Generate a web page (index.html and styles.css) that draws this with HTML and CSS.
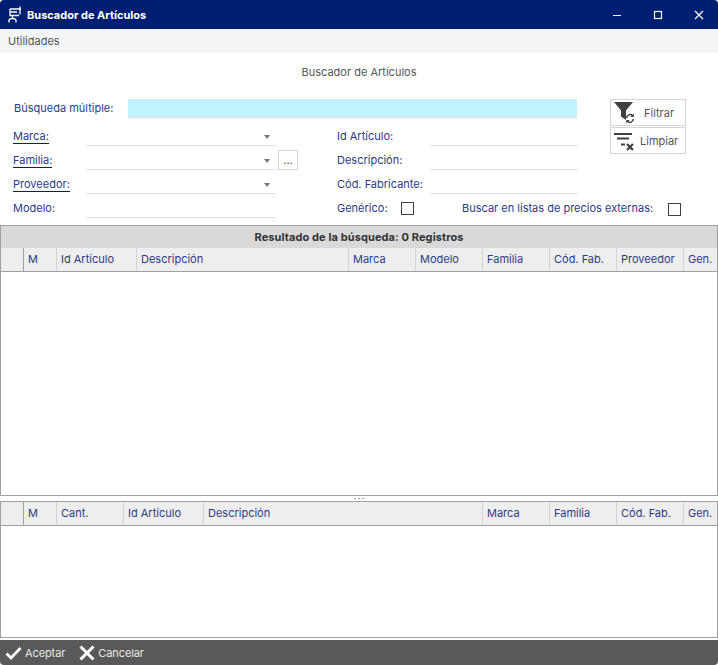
FILE: index.html
```html
<!DOCTYPE html>
<html lang="es">
<head>
<meta charset="UTF-8" />
<meta name="viewport" content="width=device-width, initial-scale=1" />
<title>Buscador de Artículos</title>
<link rel="stylesheet" href="styles.css">
</head>
<body>

<div class="window">
  <div class="titlebar">
    <svg class="app-icon" width="18" height="18" viewBox="0 0 18 18" fill="none" stroke="#fff" stroke-width="1.300">
      <path d="M4 3h11M14 0.500v8M4 3v6.500h9M4 6h7" />
      <path d="M6.500 9.500v3M3 16.500v-2q0-2 3.500-2t3.500 2v2" />
    </svg>
    <span class="title">Buscador de Artículos</span>
    <div class="win-controls">
      <svg width="10" height="10" viewBox="0 0 10 10"><path d="M1 5.500h8" stroke="#fff" stroke-width="1.200" /></svg>
      <svg width="10" height="10" viewBox="0 0 10 10" fill="none"><rect x="1.500" y="1.500" width="7" height="7" stroke="#fff" stroke-width="1.200" /></svg>
      <svg width="10" height="10" viewBox="0 0 10 10"><path d="M1 1l8 8M9 1l-8 8" stroke="#fff" stroke-width="1.200" /></svg>
    </div>
  </div>

  <div class="menubar">Utilidades</div>

  <div class="form-title">Buscador de Artículos</div>

  <div class="search-area">
    <div class="fields">
      <div class="multi-row">
        <label class="multi-label">Búsqueda múltiple:</label>
        <div class="multi-input"></div>
      </div>
      <div class="field-grid">
        <a class="lbl link">Marca:</a>
        <div class="ctl combo"><span class="arrow"></span></div>
        <span class="dots-cell"></span>
        <span class="lbl">Id Artículo:</span>
        <div class="ctl"></div>

        <a class="lbl link">Familia:</a>
        <div class="ctl combo"><span class="arrow"></span></div>
        <span class="dots-cell"><button class="dots">...</button></span>
        <span class="lbl">Descripción:</span>
        <div class="ctl"></div>

        <a class="lbl link">Proveedor:</a>
        <div class="ctl combo"><span class="arrow"></span></div>
        <span class="dots-cell"></span>
        <span class="lbl">Cód. Fabricante:</span>
        <div class="ctl"></div>

        <span class="lbl">Modelo:</span>
        <div class="ctl"></div>
        <span class="dots-cell"></span>
        <div class="check-row">
          <span class="lbl generic">Genérico:</span>
          <span class="check"></span>
          <span class="lbl external">Buscar en listas de precios externas:</span>
          <span class="check check-ext"></span>
        </div>
      </div>
    </div>

    <div class="tools">
      <button class="tool filter">
        <svg width="24" height="24" viewBox="0 0 24 24">
          <path d="M0 1h19l-7 8.500V19l-5-3.500V9.500z" fill="#404040" />
          <path d="M12.700 17a3.300 3.300 0 0 1 5.800-2.200M19.300 18a3.300 3.300 0 0 1-5.800 2.200" fill="none" stroke="#404040" stroke-width="1.500" />
          <path d="M19.800 12.500v3.500h-3.500zM12.200 22.500V19h3.500z" fill="#404040" />
        </svg>
        <span>Filtrar</span>
      </button>
      <button class="tool clear">
        <svg width="22" height="20" viewBox="0 0 22 20">
          <path d="M0 3h18M3 7.500h12M7 13.500h4" stroke="#404040" stroke-width="1.800" fill="none" />
          <path d="M13 13l6 6M19 13l-6 6" stroke="#404040" stroke-width="2.200" fill="none" />
        </svg>
        <span>Limpiar</span>
      </button>
    </div>
  </div>

  <div class="panel results">
    <div class="panel-title">Resultado de la búsqueda: 0 Registros</div>
    <div class="grid-head cols-top">
      <span class="corner"></span>
      <span>M</span>
      <span>Id Artículo</span>
      <span>Descripción</span>
      <span>Marca</span>
      <span>Modelo</span>
      <span>Familia</span>
      <span>Cód. Fab.</span>
      <span>Proveedor</span>
      <span>Gen.</span>
    </div>
  </div>

  <div class="splitter">
    <span></span><span></span><span></span>
  </div>

  <div class="panel selected">
    <div class="grid-head cols-bottom">
      <span class="corner"></span>
      <span>M</span>
      <span>Cant.</span>
      <span>Id Artículo</span>
      <span>Descripción</span>
      <span>Marca</span>
      <span>Familia</span>
      <span>Cód. Fab.</span>
      <span>Gen.</span>
    </div>
  </div>

  <div class="footer">
    <button class="foot-btn">
      <svg width="17" height="14" viewBox="0 0 17 14"><path d="M1.500 7.500l4.500 4.500L15.500 2" fill="none" stroke="#fff" stroke-width="2.800" /></svg>
      <span>Aceptar</span>
    </button>
    <button class="foot-btn">
      <svg width="16" height="16" viewBox="0 0 16 16"><path d="M1.500 1.500l13 13M14.500 1.500l-13 13" fill="none" stroke="#fff" stroke-width="3" /></svg>
      <span>Cancelar</span>
    </button>
  </div>
</div>

</body>
</html>
```

FILE: styles.css
```css
* {
  box-sizing: border-box;
}
body {
  margin: 0;
  background: #fff;
  font-family: Inter, "Liberation Sans", sans-serif;
  font-size: 11px;
  color: #555;
}
button {
  font-family: inherit;
  font-size: 11px;
  background: #fff;
  padding: 0;
}
.window {
  width: 718px;
  height: 665px;
  display: flex;
  flex-direction: column;
  overflow: hidden;
  border-radius: 4px;
}
.titlebar {
  height: 29px;
  flex: none;
  background: #001f72;
  color: #fff;
  display: flex;
  align-items: center;
  padding-left: 6px;
}
.title {
  margin-left: 3px;
  font-weight: 700;
  font-size: 11px;
}
.win-controls {
  margin-left: auto;
  display: flex;
  gap: 31px;
  padding-right: 14px;
}
.menubar {
  height: 24px;
  flex: none;
  background: #f4f5f7;
  padding: 5px 8px;
  line-height: 15px;
  color: #555;
}
.form-title {
  height: 46px;
  flex: none;
  text-align: center;
  padding-top: 12px;
  line-height: 15px;
  color: #555;
}
.search-area {
  height: 126px;
  flex: none;
  display: flex;
  padding-left: 13px;
}
.fields {
  width: 565px;
}
.multi-row {
  height: 23px;
  display: flex;
}
.multi-label {
  width: 115px;
  padding: 2px 0 0 1px;
  line-height: 15px;
  color: #2c3a87;
}
.multi-input {
  width: 449px;
  height: 19px;
  background: #c0f3ff;
  border-bottom: 1px solid #ddd;
}
.field-grid {
  display: grid;
  grid-template-columns: 73px 190px 61px 93px 148px;
  grid-auto-rows: 24px;
}
.lbl {
  line-height: 15px;
  padding-top: 7px;
  color: #2c3a87;
}
.link {
  align-self: start;
  justify-self: start;
  padding-top: 7px;
  line-height: 14px;
  border-bottom: 1px solid #001f72;
}
.ctl {
  border-bottom: 1px solid #ddd;
  position: relative;
}
.arrow {
  position: absolute;
  right: 6px;
  top: 13px;
  border-left: 3.500px solid transparent;
  border-right: 3.500px solid transparent;
  border-top: 4px solid #777;
}
.dots-cell {
  display: block;
  padding: 4px 0 0 2px;
}
.dots {
  display: block;
  width: 20px;
  height: 20px;
  border: 1px solid #d4d4d4;
  color: #555;
  line-height: 16px;
}
.check-row {
  grid-column: span 2;
  display: flex;
  align-items: flex-start;
}
.generic {
  width: 64px;
  flex: none;
}
.check {
  width: 13px;
  height: 13px;
  margin-top: 8px;
  border: 1px solid #404040;
  flex: none;
}
.check-ext {
  margin-top: 9px;
}
.external {
  margin-left: 48px;
  width: 206px;
  flex: none;
  white-space: nowrap;
  padding-top: 7px;
}
.tools {
  margin-left: 32px;
  width: 76px;
  display: flex;
  flex-direction: column;
  gap: 1px;
}
.tool {
  width: 76px;
  height: 27px;
  padding-left: 3px;
  border: 1px solid #d4d4d4;
  display: flex;
  align-items: center;
  color: #555;
}
.filter span {
  margin-left: 6px;
}
.clear span {
  margin-left: 4px;
}
.panel {
  border: 1px solid #a0a0a0;
  background: #fff;
  flex: none;
}
.results {
  height: 271px;
}
.selected {
  height: 137px;
}
.panel-title {
  height: 22px;
  background: #d9d9d9;
  text-align: center;
  font-weight: 700;
  color: #333;
  line-height: 22px;
  letter-spacing: 0.1px;
}
.grid-head {
  height: 24px;
  display: grid;
  background: #eee;
  border-bottom: 1px solid #a0a0a0;
  color: #2c3a87;
  line-height: 22px;
}
.grid-head span {
  padding-left: 4px;
  border-right: 1px solid #d4d4d4;
  white-space: nowrap;
  overflow: hidden;
}
.grid-head span:last-child {
  border-right: none;
}
.grid-head .corner {
  border-right-color: #a0a0a0;
}
.cols-top {
  grid-template-columns: 23px 33px 80px 212px 67px 67px 67px 67px 67px 1fr;
}
.cols-bottom {
  grid-template-columns: 23px 33px 67px 80px 279px 67px 67px 67px 1fr;
}
.splitter {
  height: 5px;
  flex: none;
  display: flex;
  justify-content: center;
  align-items: center;
  gap: 2px;
}
.splitter span {
  width: 2px;
  height: 1px;
  background: #999;
}
.footer {
  margin-top: 2px;
  flex: 1;
  background: #595959;
  display: flex;
  align-items: center;
  padding-left: 5px;
  gap: 14px;
}
.foot-btn {
  background: none;
  border: none;
  color: #e8e8e8;
  display: flex;
  align-items: center;
  gap: 3px;
  letter-spacing: -0.1px;
}
```
